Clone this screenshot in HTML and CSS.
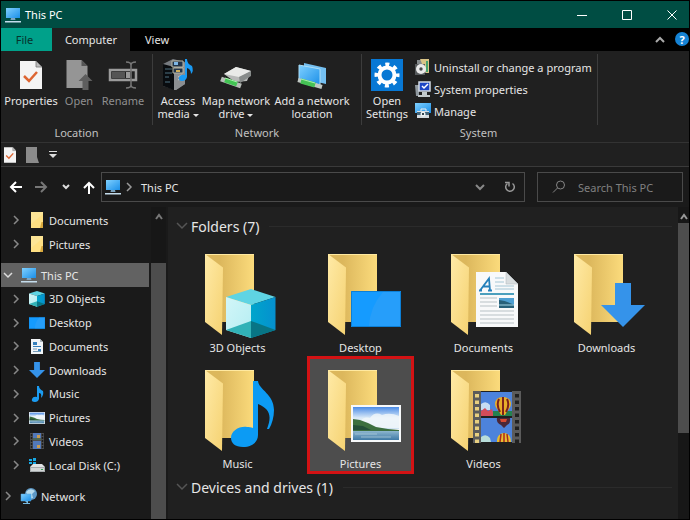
FILE: index.html
```html
<!DOCTYPE html>
<html lang="en">
<head>
<meta charset="utf-8">
<title>This PC</title>
<link rel="stylesheet" href="styles.css">
</head>
<body>
<svg class="defs" width="0" height="0" aria-hidden="true">
  <defs>
    <linearGradient id="g-back" x1="0" y1="0" x2="1" y2="0"><stop offset="0.3" stop-color="#dcb75c"/><stop offset="1" stop-color="#fbdb7c"/></linearGradient>
    <linearGradient id="g-flap" x1="0" y1="0" x2="1" y2="1"><stop offset="0" stop-color="#ffeaa6"/><stop offset="1" stop-color="#f5d272"/></linearGradient>
    <linearGradient id="g-screen" x1="0" y1="0" x2="1" y2="1"><stop offset="0" stop-color="#7fd0ff"/><stop offset="1" stop-color="#1b8fe8"/></linearGradient>
    <linearGradient id="g-sky" x1="0" y1="0" x2="0" y2="1"><stop offset="0" stop-color="#4a8be6"/><stop offset="0.5" stop-color="#dcebf8"/><stop offset="1" stop-color="#cfe2f2"/></linearGradient>
    <linearGradient id="g-sea" x1="0" y1="0" x2="0" y2="1"><stop offset="0" stop-color="#8db6ce"/><stop offset="1" stop-color="#3f7aa6"/></linearGradient>
    <linearGradient id="g-left" x1="0" y1="0" x2="1" y2="1"><stop offset="0" stop-color="#d2f6f8"/><stop offset="1" stop-color="#b4edf2"/></linearGradient>
    <linearGradient id="g-right" x1="0" y1="0" x2="1" y2="0"><stop offset="0" stop-color="#00a5cb"/><stop offset="1" stop-color="#0590cf"/></linearGradient>
  </defs>
  <symbol id="folder" viewBox="0 0 80 84"><path d="M9 0h49v68H9z" fill="url(#g-back)"/><path d="M9 0l18 13.500-1 67.500L9 68z" fill="url(#g-flap)"/><path d="M9 .5h49" stroke="#ffe9a0"/></symbol>
  <symbol id="folder-s" viewBox="0 0 16 16"><path d="M2 0h12v16H2z" fill="#ffe083"/><path d="M2 0h12v2L2 12z" fill="#fbe8a4" opacity=".6"/><path d="M12.500 10h1.500v6h-3z" fill="#d9a93e"/></symbol>
  <symbol id="pc" viewBox="0 0 16 16"><path d="M1 1h14v10H1z" fill="url(#g-screen)"/><path d="M6 11h4l.5 2h-5z" fill="#7da4c0"/><path d="M0 14h16v1.500H0z" fill="#c4dcec"/></symbol>
  <symbol id="cube" viewBox="0 0 50 50"><path d="M25 0l24.500 8L25 16 0 8z" fill="#5fd4e3"/><path d="M0 8l25 8v33L0 41z" fill="url(#g-left)"/><path d="M25 16l24.500-8v33L25 49z" fill="url(#g-right)"/><path d="M0 41l25-9v17z" fill="#31b2b7"/><path d="M25 32l24.500 9L25 49z" fill="#087585"/></symbol>
  <symbol id="photo" viewBox="0 0 50 37"><path d="M0 0h50v37H0z" fill="#f7f9fa"/><path d="M2 2h46v22H2z" fill="url(#g-sky)"/><path d="M8 17q5-6 11-4 5-7 12-3 8-3 17 1v12H8z" fill="#f3f7fa" opacity=".8"/><path d="M2 14l7 1 8 3 8 4 12 2 11 1v3H2z" fill="#3c6f3f"/><path d="M2 20l10 1 8 4H2z" fill="#244f38"/><path d="M2 26h46v9H2z" fill="url(#g-sea)"/><path d="M4 29h22M10 32h30" stroke="#b5d1dd" stroke-width=".7"/></symbol>
  <symbol id="film" viewBox="0 0 48 52">
    <path d="M0 0h8v52H0zM39 0h9v52h-9z" fill="#5b5b5b"/><path d="M8 0h31v52H8z" fill="#202020"/>
    <path d="M4 3v49" stroke="#e7cf80" stroke-width="4" stroke-dasharray="3.500 3"/><path d="M44 3v49" stroke="#202020" stroke-width="4" stroke-dasharray="3.500 3"/>
    <path d="M8 1h31v24H8zM8 27h31v24H8z" fill="#4d83dc"/>
    <path d="M8 13q5-4 9 1v5H8z" fill="#c6dcf4"/><path d="M8 20l4-3 3 3 4-2 2 7H8z" fill="#d24c5a"/><path d="M20 20h19v5H20z" fill="#24814f"/>
    <path d="M30 6c-9 0-10 9-5 13l3 5h4l3-5c5-4 4-13-5-13z" fill="#e8ae29"/><path d="M26 8q-3 6 1 13M30 6v18M34 8q3 6-1 13" stroke="#7c211c" stroke-width="2" fill="none"/>
    <path d="M24 27h13q1 5-3 7l-3 3-3-3q-5-2-4-7z" fill="#4b2738"/><path d="M27 28h7l-1 3h-5z" fill="#d64a33"/>
    <path d="M24 51c-1-11 14-13 14 0z" fill="#e5be31"/><path d="M28 43l-1 8M31 42v9M34 43l1 8" stroke="#a9291f" stroke-width="1.500"/><path d="M8 46q5-4 9 1l1 4H8z" fill="#b8ddda"/>
  </symbol>
  <symbol id="film-s" viewBox="0 0 16 16"><path d="M1 0h14v16H1z" fill="#4c4c4c"/><path d="M2.500 1v15M13.500 1v15" stroke="#1d1d1d" stroke-width="1.500" stroke-dasharray="2 1"/><path d="M4 0h8v7H4zM4 8h8v8H4z" fill="#5278b8"/><path d="M4 5h8v2H4z" fill="#4b6557"/><path d="M8 2h3v3H8zM8 12h3v3H8z" fill="#c79b4f"/></symbol>
  <symbol id="down" viewBox="0 0 44 44"><path d="M14 0h16v22h14L22 44 0 22h14z" fill="#3593ea"/></symbol>
  <symbol id="desk" viewBox="0 0 50 36"><path d="M0 0h50v36H0z" fill="#159bff"/><path d="M32 1h17v34H18q1-19 14-34z" fill="#2ea0f8" opacity=".7"/><path d="M.5 .5h49v35H.5z" fill="none" stroke="#0c7fd6"/></symbol>
  <symbol id="props" viewBox="0 0 22 28"><path d="M0 0h16l6 6v22H0z" fill="#f4f4f4"/><path d="M16 0l6 6h-6z" fill="#bdbdbd" stroke="#777" stroke-width=".8"/><path d="M4 15l5 5 8-9" fill="none" stroke="#dd6532" stroke-width="2.500"/></symbol>
  <symbol id="chev" viewBox="0 0 10 10"><path d="M3 1l4 4-4 4" fill="none" stroke="currentColor" stroke-width="1.500"/></symbol>
</svg>

<div class="window">
  <header class="titlebar">
    <svg class="i16"><use href="#pc"/></svg>
    <h1>This PC</h1>
    <div class="controls">
      <button aria-label="Minimize"><svg width="10" height="10"><path d="M0 5.500h10" stroke="#fff"/></svg></button>
      <button aria-label="Maximize"><svg width="10" height="10"><path d="M.5 .5h9v9h-9z" fill="none" stroke="#fff"/></svg></button>
      <button aria-label="Close"><svg width="10" height="10"><path d="M.5 .5l9 9M9.500 .5l-9 9" stroke="#fff"/></svg></button>
    </div>
  </header>

  <nav class="tabs">
    <button class="file">File</button>
    <button class="current">Computer</button>
    <button class="view">View</button>
    <button class="icon collapse" aria-label="Collapse ribbon"><svg width="10" height="8"><path d="M1 6l4-4 4 4" fill="none" stroke="#aaa" stroke-width="2"/></svg></button>
    <button class="icon help" aria-label="Help">?</button>
  </nav>

  <section class="ribbon">
    <div class="group location">
      <div class="tools">
        <button class="tool w54"><svg width="22" height="28"><use href="#props"/></svg>Properties</button>
        <button class="tool w42" disabled><svg width="27" height="30" viewBox="0 0 27 30"><path d="M1 0h15l6 6v22H1z" fill="#959595"/><path d="M16 0l6 6h-6z" fill="#555"/><path d="M20 14l7 7h-4v9h-6v-9h-4z" fill="#5e5e5e"/></svg>Open</button>
        <button class="tool w46" disabled><svg width="28" height="28" viewBox="0 0 28 28"><path d="M1 9h26v10H1z" fill="none" stroke="#9b9b9b" stroke-width="2.500"/><path d="M3 11h13v6H3z" fill="#555"/><path d="M17 11h4v6h-4z" fill="#999"/><path d="M17 1q5 0 5 3v20q0 3-5 3M27 1q-5 0-5 3v20q0 3 5 3" stroke="#777" fill="none" stroke-width="1.500"/></svg>Rename</button>
      </div>
      <h2>Location</h2>
    </div>
    <div class="group network">
      <div class="tools">
        <button class="tool w44"><svg width="32" height="32" viewBox="0 0 32 32"><path d="M1 5l10-5 12 3v22l-9 6-13-4z" fill="#777b80"/><path d="M1 5l11 3v23L1 27z" fill="#090c0f"/><path d="M12 8l11-4v21l-9 6h-2z" fill="#8b8e91"/><path d="M3 10h7M3 14h7M3 18h4M3 23h5" stroke="#4f7181"/><path d="M10 2h11v6H10zM11 9h10v5H11z" fill="#223449" stroke="#b7b6a5"/><path d="M12 3h4v3h-4z" fill="#7eb7e7"/><path d="M14 11h4v2h-4z" fill="#d1ae57"/><path d="M16 18l4-2M16 21l4-2" stroke="#c8c8c8"/><path d="M23 0h2q0 5 5 7 2 5-1 8 0-5-4-6v9q-1 4-5 4-4 0-3-4 2-3 6-2z" fill="#199af3"/></svg>Access<br>media <i></i></button>
        <button class="tool w72"><svg width="32" height="30" viewBox="0 0 32 30"><path d="M4 14l12-7 15 4-4 10-12 1z" fill="#b8bab9"/><path d="M4 14l12-7 15 4-12 6z" fill="#e9eae8"/><path d="M19 17l12-6v5l-11 7z" fill="#878b8a"/><path d="M1 19l20 7" stroke="#b7bdb8" stroke-width="5"/><path d="M5 20l12 4" stroke="#42c453" stroke-width="5"/><path d="M5 18l12 4" stroke="#a9efaa"/></svg>Map network<br>drive <i></i></button>
        <button class="tool w80"><svg width="30" height="30" viewBox="0 0 30 30"><path d="M7 3l22 5v16L7 19z" fill="#74bff0"/><path d="M2 5l21 4v16L2 20z" fill="url(#g-screen)" stroke="#abddf7"/><path d="M1 20l24 7" stroke="#c0c8c3" stroke-width="4"/><path d="M4 21l14 4" stroke="#45c255" stroke-width="5"/><path d="M4 19l14 4" stroke="#a9efaa"/></svg>Add a network<br>location</button>
      </div>
      <h2>Network</h2>
    </div>
    <div class="group system">
      <div class="tools">
        <button class="tool w48"><svg width="32" height="32" viewBox="0 0 32 32"><path d="M0 0h32v32H0z" fill="#0878d4"/><g fill="none" stroke="#fff"><circle cx="16" cy="16" r="7.500" stroke-width="4"/><circle cx="16" cy="16" r="10.500" stroke-width="4" stroke-dasharray="4 4.247" stroke-dashoffset="2"/></g></svg>Open<br>Settings</button>
        <div class="list">
          <button><svg width="16" height="16" viewBox="0 0 16 16"><path d="M2 1h11v13H2z" fill="#858a8c"/><path d="M5 0h9v14h-3z" fill="#d9c486"/><path d="M11 2h2v11h-2z" fill="#47a26c"/><path d="M0 5h10v11H0z" fill="#55595b"/><circle cx="6" cy="10" r="5" fill="#e9e9e9"/><circle cx="6" cy="10" r="1.700" fill="#48494a"/></svg>Uninstall or change a program</button>
          <button><svg width="16" height="16" viewBox="0 0 16 16"><path d="M0 4h4v11H1z" fill="#8f989e"/><path d="M4 1h11v9H4z" fill="#1d46c5" stroke="#d4dbe5" stroke-width="1.500"/><path d="M7 5l2 2 4-4" stroke="#fff" fill="none" stroke-width="1.500"/><path d="M7 11h5v3h3v2H3v-2h4z" fill="#c2c9cc"/></svg>System properties</button>
          <button><svg width="16" height="16" viewBox="0 0 16 16"><path d="M0 0h16v10H0z" fill="url(#g-screen)"/><path d="M2 8h12v7H2z" fill="#d5dce1"/><path d="M6 8V6h5v2" stroke="#eee" fill="none"/><path d="M2 9h12v3H2z" fill="#42657b"/><circle cx="8" cy="11" r="2.500" fill="#eef3f5"/><path d="M7 10h2v2H7z" fill="#34454f"/></svg>Manage</button>
        </div>
      </div>
      <h2>System</h2>
    </div>
  </section>

  <div class="quick">
    <button aria-label="Properties"><svg width="12" height="16"><use href="#props"/></svg></button>
    <button aria-label="New folder"><svg width="13" height="16"><path d="M0 0h11v10l2 6H0z" fill="#8b8b8b"/></svg></button>
    <button aria-label="Customize"><svg width="8" height="8"><path d="M0 .5h8" stroke="#ddd"/><path d="M0 3h8L4 7z" fill="#ddd"/></svg></button>
  </div>

  <div class="navrow">
    <div class="arrows">
      <button aria-label="Back"><svg width="13" height="12"><path d="M7 1L2 6l5 5M2 6h11" fill="none" stroke="#fff" stroke-width="2"/></svg></button>
      <button aria-label="Forward"><svg width="13" height="12"><path d="M6 1l5 5-5 5M11 6H0" fill="none" stroke="#777" stroke-width="2"/></svg></button>
      <button aria-label="Recent locations"><svg width="8" height="6"><path d="M1 1l3 3 3-3" fill="none" stroke="#ddd" stroke-width="2"/></svg></button>
      <button aria-label="Up"><svg width="12" height="13"><path d="M1 7l5-5 5 5M6 2v11" fill="none" stroke="#fff" stroke-width="2"/></svg></button>
    </div>
    <div class="address">
      <svg class="i16"><use href="#pc"/></svg>
      <svg class="sep" width="10" height="10"><use href="#chev"/></svg>
      <a href="#">This PC</a>
      <button class="drop" aria-label="Previous locations"><svg width="10" height="8"><path d="M1 2l4 4 4-4" fill="none" stroke="#888" stroke-width="2"/></svg></button>
      <button class="reload" aria-label="Refresh"><svg width="12" height="12" viewBox="0 0 12 12"><path d="M8.500 2.500a4.300 4.300 0 1 1-5 0" fill="none" stroke="#999" stroke-width="1.500"/><path d="M1 1.500h4v4" fill="none" stroke="#999" stroke-width="1.500"/></svg></button>
    </div>
    <label class="search">
      <svg width="14" height="14"><circle cx="8.500" cy="5" r="4" fill="none" stroke="#858585"/><path d="M5.500 8L1 12.500" stroke="#858585"/></svg>
      <input type="search" placeholder="Search This PC" aria-label="Search This PC">
    </label>
  </div>

  <div class="body">
    <aside class="side">
      <nav class="tree">
        <ul>
          <li><a href="#"><svg class="ar"><use href="#chev"/></svg><svg class="i16"><use href="#folder-s"/></svg>Documents</a></li>
          <li><a href="#"><svg class="ar"><use href="#chev"/></svg><svg class="i16"><use href="#folder-s"/></svg>Pictures</a></li>
        </ul>
        <a href="#" class="top on"><svg class="ar"><path d="M1 3l4 4 4-4" fill="none" stroke="#ddd" stroke-width="1.500"/></svg><svg class="i16"><use href="#pc"/></svg>This PC</a>
        <ul class="kids">
          <li><a href="#"><svg class="ar"><use href="#chev"/></svg><svg class="i16"><use href="#cube"/></svg>3D Objects</a></li>
          <li><a href="#"><svg class="ar"><use href="#chev"/></svg><svg class="i16"><use href="#desk"/></svg>Desktop</a></li>
          <li><a href="#"><svg class="ar"><use href="#chev"/></svg><svg class="i16" viewBox="0 0 16 16"><path d="M2 1h9l3 3v12H2z" fill="#f1f5f8"/><path d="M11 1l3 3h-3z" fill="#a9b4bc"/><path d="M4 4h4v3H4zM4 8h8v1H4zM9 11h3v2H9z" fill="#3580bd"/><path d="M4 11h4M4 13.500h8" stroke="#789cb8"/></svg>Documents</a></li>
          <li><a href="#"><svg class="ar"><use href="#chev"/></svg><svg class="i16"><use href="#down"/></svg>Downloads</a></li>
          <li><a href="#"><svg class="ar"><use href="#chev"/></svg><svg class="i16" viewBox="0 0 16 16"><path d="M8 0h2q0 3 4 5 1 4-2 7 1-5-2-5v6q-1 3-4 3-4 0-3-3 1-3 5-2z" fill="#1b9cf2"/></svg>Music</a></li>
          <li><a href="#"><svg class="ar"><use href="#chev"/></svg><svg class="i16"><use href="#photo"/></svg>Pictures</a></li>
          <li><a href="#"><svg class="ar"><use href="#chev"/></svg><svg class="i16"><use href="#film-s"/></svg>Videos</a></li>
          <li><a href="#"><svg class="ar"><use href="#chev"/></svg><svg class="i16" viewBox="0 0 16 16"><path d="M0 2h3v2H0zM4 1h3v3H4zM0 5h3v2H0zM4 5h3v3H4z" fill="#16a8e5"/><path d="M1 10l3-3h9l3 3z" fill="#e0e3e4"/><path d="M1 10h15v5H1z" fill="#a8adaf"/><path d="M2 11h13v3H2z" fill="#d3d6d7"/><path d="M12 12h2v1h-2z" fill="#35a853"/></svg>Local Disk (C:)</a></li>
        </ul>
        <a href="#" class="top net"><svg class="ar"><use href="#chev"/></svg><svg class="i16" viewBox="0 0 16 16"><circle cx="10" cy="6" r="6" fill="#5d98c5"/><path d="M5 4q4-5 9-1l-3 3 1 4-4 1z" fill="#b7dbed"/><path d="M0 6h10v7H0z" fill="url(#g-screen)" stroke="#5aa6d8" stroke-width=".5"/><path d="M4 13h3v2H2v1h7v-1H6z" fill="#75b9e0"/></svg>Network</a>
      </nav>
      <div class="bar"><svg width="10" height="8"><path d="M2 6l3-4 3 4" fill="none" stroke="#777" stroke-width="2"/></svg><div class="thumb"></div></div>
    </aside>

    <main>
      <h2 class="head"><svg width="11" height="8"><path d="M1 1l5 5 5-5" fill="none" stroke="#555" stroke-width="1.500"/></svg>Folders (7)</h2>
      <div class="tiles">
        <a href="#" class="tile"><svg viewBox="0 0 83 84"><use href="#folder" width="80" height="84"/><use href="#cube" x="30" y="35" width="50" height="50"/></svg>3D Objects</a>
        <a href="#" class="tile"><svg viewBox="0 0 83 84"><use href="#folder" width="80" height="84"/><use href="#desk" x="32" y="37" width="50" height="36"/></svg>Desktop</a>
        <a href="#" class="tile"><svg viewBox="0 0 83 84"><use href="#folder" width="80" height="84"/><path d="M34 18h30l12 12v43H34z" fill="#f8f9fa"/><path d="M64 18l12 12H64z" fill="#d8dddf" stroke="#aeb7bb" stroke-width=".5"/><path d="M38 36.500l9-12 1 12M41 32.500h7M37 36.500h3M46 36.500h4" fill="none" stroke="#2480bb" stroke-width="1.800"/><path d="M53 24h9M53 28h9M53 32h19M53 35h19" stroke="#a4c6d5"/><path d="M38 40h34" stroke="#4b9fbd" stroke-width="2"/><path d="M38 44h17M38 48h17M38 52h17M38 57h34M38 61h34M38 65h34M38 69h34" stroke="#b8c1c5"/><path d="M57 44h15v10H57z" fill="#4e9fd2"/><path d="M57 46q8 1 15 5v3H57z" fill="#276079"/><path d="M57 51h15" stroke="#a7d7e8"/></svg>Documents</a>
        <a href="#" class="tile"><svg viewBox="0 0 83 84"><use href="#folder" width="80" height="84"/><use href="#down" x="36" y="29" width="44" height="44"/></svg>Downloads</a>
        <a href="#" class="tile"><svg viewBox="0 0 83 84"><use href="#folder" width="80" height="84"/><path d="M57 11h5c1 9 16 13 16 29 0 7-2 14-5 19h-2c5-13 3-20-9-25v31c0 7-6 12-15 12-8 0-12-4-12-9 0-7 8-12 16-11 2 0 4 0 6 1z" fill="#0c9bf4"/></svg>Music</a>
        <a href="#" class="tile picked"><svg viewBox="0 0 83 84"><use href="#folder" width="80" height="84"/><use href="#photo" x="32" y="35" width="50" height="37"/></svg>Pictures</a>
        <a href="#" class="tile"><svg viewBox="0 0 83 84"><use href="#folder" width="80" height="84"/><use href="#film" x="31" y="21" width="48" height="52"/></svg>Videos</a>
      </div>
      <h2 class="head"><svg width="11" height="8"><path d="M1 1l5 5 5-5" fill="none" stroke="#555" stroke-width="1.500"/></svg>Devices and drives (1)</h2>
    </main>
    <div class="bar mainbar"><svg width="10" height="8"><path d="M2 6l3-4 3 4" fill="none" stroke="#999" stroke-width="2"/></svg><div class="thumb"></div></div>
  </div>
</div>
</body>
</html>
```
FILE: styles.css
```css
* { box-sizing: border-box; }

body {
  margin: 0;
  background: #000;
  color: #e6e6e6;
  font: 11px/13px "Noto Sans", "Open Sans", sans-serif;
}

h1, h2, ul { margin: 0; padding: 0; font: inherit; list-style: none; }
a { color: inherit; text-decoration: none; }

button {
  border: 0;
  padding: 0;
  background: none;
  color: inherit;
  font: inherit;
  white-space: nowrap;
}

svg { flex: none; overflow: visible; }
.defs { position: absolute; }
.i16 { width: 16px; height: 16px; }

.window {
  display: flex;
  flex-direction: column;
  min-height: 100vh;
  border: 1px solid #000;
  background: #1a1a1a;
}

/* Title bar */
.titlebar {
  display: flex;
  align-items: center;
  gap: 4px;
  height: 27px;
  padding-left: 4px;
  background: #004d43;
  color: #fff;
}
.controls { display: flex; gap: 11px; margin-left: auto; }
.controls button { width: 34px; height: 27px; display: grid; place-items: center; }

/* Ribbon tabs */
.tabs { display: flex; height: 23px; background: #000; }
.file { width: 51px; padding-right: 4px; background: #00a18a; color: #06332d; }
.current { width: 78px; background: #202020; }
.view { width: 54px; }
.icon { display: grid; place-items: center; }
.collapse { width: 24px; margin-left: auto; }
.help {
  width: 14px;
  height: 14px;
  margin: 4px 0 0 3px;
  border-radius: 7px;
  background: #1583d5;
  color: #fff;
  font-weight: bold;
}

/* Ribbon */
.ribbon {
  display: flex;
  height: 92px;
  padding-top: 3px;
  border-bottom: 1px solid #333;
  background: #202020;
}
.group {
  display: flex;
  flex-direction: column;
  align-self: flex-start;
  position: relative;
}
.group::after {
  content: "";
  position: absolute;
  top: 0;
  right: 0;
  width: 1px;
  height: 71px;
  background: #3c3c3c;
}
.location { width: 152px; padding-left: 3px; }
.network { width: 209px; padding-left: 3px; }
.system { width: 236px; padding-left: 1px; }
.tools { display: flex; align-items: flex-start; height: 72px; }
.group h2 { padding-right: 4px; color: #c0c0c0; text-align: center; }
.tool { position: relative; padding-top: 40px; }
.tool svg {
  position: absolute;
  top: 21px;
  left: 50%;
  transform: translate(-50%, -50%);
}
.tool:disabled { color: #8f8f8f; }
.tool i {
  display: inline-block;
  border: 3px solid transparent;
  border-top-color: currentColor;
  border-bottom: 0;
  vertical-align: middle;
}
.w42 { width: 42px; }
.w44 { width: 44px; }
.w46 { width: 46px; }
.w48 { width: 48px; }
.w54 { width: 54px; }
.w72 { width: 72px; }
.w80 { width: 80px; }
.list { padding: 2px 0 0 4px; }
.list button { display: flex; align-items: center; gap: 3px; height: 22px; }

/* Quick access toolbar */
.quick {
  display: flex;
  align-items: center;
  height: 24px;
  gap: 10px;
  padding-left: 3px;
  border-bottom: 1px solid #3a3a3a;
  background: #202020;
}
.quick button { display: grid; place-items: center; }

/* Address row */
.navrow { display: flex; align-items: center; height: 40px; padding-right: 6px; }
.arrows { display: flex; align-items: center; justify-content: space-between; width: 100px; padding: 0 6px 0 8px; }
.arrows button, .address button { display: grid; place-items: center; }
.address {
  display: flex;
  align-items: center;
  flex: 1;
  height: 30px;
  padding: 0 8px 0 3px;
  border: 1px solid #4a4a4a;
}
.sep { margin: 0 7px 0 3px; color: #999; }
.drop { margin-left: auto; }
.reload { margin-left: 19px; }
.search {
  display: flex;
  align-items: center;
  gap: 12px;
  width: 146px;
  height: 30px;
  margin-left: 12px;
  padding-left: 14px;
  border: 1px solid #4a4a4a;
}
.search input {
  flex: 1;
  min-width: 0;
  padding: 0;
  border: 0;
  outline: 0;
  background: none;
  color: inherit;
  font: inherit;
}
.search input::placeholder { color: #808080; opacity: 1; }

/* Navigation pane */
.body { display: flex; flex: 1; }
.side { display: flex; width: 167px; }
.tree { display: flex; flex-direction: column; flex: 1; padding: 1px 0 11px; }
.tree a { display: flex; align-items: center; gap: 4px; height: 100%; min-height: 23px; padding-left: 10px; }
.tree li { height: 24px; }
.ar { width: 10px; height: 10px; margin-right: 4px; color: #888; }
.tree .top { height: 24px; margin: 7px 2px 0 0; padding-left: 2px; }
.tree .on { background: #626262; }
.tree .kids { display: grid; flex: 1; grid-auto-rows: 1fr; }
.kids li { height: auto; }
.bar { width: 15px; margin-right: 2px; text-align: center; }
.bar svg { display: block; margin: 6px auto 0; }
.thumb { background: #4d4d4d; }
.side .bar { display: flex; flex-direction: column; background: #171717; }
.side .thumb { flex: 1; margin-top: 42px; }

/* Content pane */
main { flex: 1; padding: 7px 0 0 17px; background: #202020; }
.head {
  display: flex;
  align-items: center;
  gap: 4px;
  height: 24px;
  margin: 0 6px 0 -9px;
  font-size: 14px;
}
.head::after { content: ""; flex: 1; height: 1px; margin-left: 6px; background: #2b2b2b; }
.tiles {
  display: grid;
  grid-template-columns: repeat(auto-fill, 105px);
  grid-auto-rows: 116px;
  column-gap: 18px;
  padding: 3px 0 2px;
}
.tile { display: flex; flex-direction: column; align-items: center; gap: 3px; padding-top: 13px; }
.tile svg { width: 83px; height: 84px; }
.picked { background: #4d4d4d; outline: 3px solid #d31214; outline-offset: -2px; }
.mainbar { width: 11px; margin: 0; background: #171717; }
.mainbar .thumb { height: 210px; margin-top: 2px; }
```
